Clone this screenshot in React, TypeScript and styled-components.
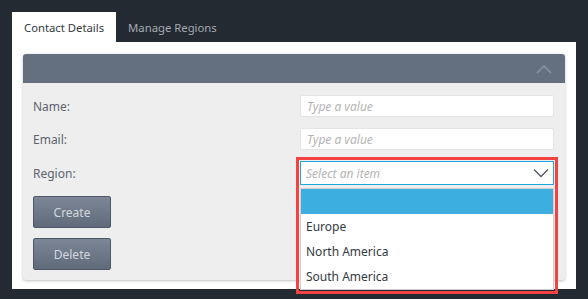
import * as React from 'react';
import styled, { createGlobalStyle } from 'styled-components';

const GlobalStyle = createGlobalStyle`
    html, body {
        margin: 0;
        padding: 0;
        background: #232a32;
        font-family: "Noto Sans", "Open Sans", sans-serif;
    }
`;

const Page = styled.div`
    width: 588px;
    height: 299px;
    padding: 12px 0 0 12px;
    box-sizing: border-box;
    background: #232a32;
`;

const TabStrip = styled.div`
    display: flex;
    height: 30px;
`;

const Tab = styled.div<{ $active?: boolean }>`
    display: flex;
    align-items: center;
    padding: 0 12px 0 12px;
    font-size: 11.3px;
    background: ${p => p.$active ? '#ffffff' : 'transparent'};
    color: ${p => p.$active ? '#333a42' : '#a3a9b1'};
`;

const TabPanel = styled.div`
    width: 564px;
    height: 247px;
    box-sizing: border-box;
    background: #ffffff;
    padding: 12px 11px 0 11px;
`;

const Card = styled.div`
    width: 542px;
    border-radius: 3px;
    background: #eeeeee;
    box-shadow: 0 1px 3px rgba(0, 0, 0, 0.25);
`;

const CardHeader = styled.div`
    display: flex;
    align-items: center;
    justify-content: flex-end;
    height: 29px;
    padding-right: 13px;
    background: #646f80;
    border-radius: 3px 3px 0 0;
`;

const CardBody = styled.div`
    display: grid;
    grid-template-columns: 267px 254px;
    grid-auto-rows: auto;
    row-gap: 11px;
    padding: 12px 11px 10px 10px;
`;

const Label = styled.label`
    display: flex;
    align-items: center;
    font-size: 12px;
    color: #5c6470;
`;

const TextInput = styled.input`
    height: 22px;
    box-sizing: border-box;
    border: 1px solid #e4e4e4;
    border-radius: 2px;
    background: #ffffff;
    padding: 0 6px;
    font-family: inherit;
    font-size: 12px;

    &::placeholder {
        color: #b4b4b4;
        font-style: italic;
    }
`;

const SelectWrap = styled.div`
    position: relative;
`;

const SelectBox = styled.div`
    display: flex;
    align-items: center;
    justify-content: space-between;
    height: 24px;
    box-sizing: border-box;
    border: 1px solid #1ea6df;
    background: #ffffff;
    padding: 0 4px 0 5px;
    font-size: 12px;
    font-style: italic;
    color: #b4b4b4;
`;

const DropList = styled.div`
    position: absolute;
    top: 27px;
    left: 0;
    width: 254px;
    box-sizing: border-box;
    border: 1px solid #d0d0d0;
    background: #ffffff;
    z-index: 2;
`;

const DropItem = styled.div<{ $highlight?: boolean }>`
    display: flex;
    align-items: center;
    height: 25px;
    padding-left: 5px;
    font-size: 12px;
    color: #333a42;
    background: ${p => p.$highlight ? '#3daee0' : 'transparent'};
`;

const Annotation = styled.div`
    position: absolute;
    left: -4px;
    top: -4px;
    width: 262px;
    height: 137px;
    box-sizing: border-box;
    border: 3px solid #f34242;
    pointer-events: none;
    z-index: 3;
`;

const ButtonCol = styled.div`
    display: flex;
    flex-direction: column;
    gap: 10px;
    grid-column: 1;
`;

const Button = styled.button`
    width: 78px;
    height: 32px;
    border: 1px solid #4f5867;
    border-radius: 2px;
    background: linear-gradient(#7c8696, #5f6a7a);
    color: #d4d8de;
    font-family: inherit;
    font-size: 12px;
    padding: 0;
`;

const ChevronUp = () => (
    <svg width="16" height="10" viewBox="0 0 16 10">
        <path d="M1 9 L8 2 L15 9" fill="none" stroke="#8a94a4" strokeWidth="1.5" />
    </svg>
);

const ChevronDown = () => (
    <svg width="16" height="10" viewBox="0 0 16 10">
        <path d="M1 1.5 L8 8.5 L15 1.5" fill="none" stroke="#555b63" strokeWidth="1.4" />
    </svg>
);

const regions = ['', 'Europe', 'North America', 'South America'];

const App: React.FC = () => {
    return (
        <Page>
            <GlobalStyle />
            <TabStrip>
                <Tab $active>Contact Details</Tab>
                <Tab>Manage Regions</Tab>
            </TabStrip>

            <TabPanel>
                <Card>
                    <CardHeader>
                        <ChevronUp />
                    </CardHeader>

                    <CardBody>
                        <Label>Name:</Label>
                        <TextInput placeholder='Type a value' />

                        <Label>Email:</Label>
                        <TextInput placeholder='Type a value' />

                        <Label>Region:</Label>
                        <SelectWrap>
                            <SelectBox>
                                <span>Select an item</span>
                                <ChevronDown />
                            </SelectBox>
                            <DropList>
                                {regions.map((r, i) => (
                                    <DropItem key={`region-${i}`} $highlight={i === 0}>{r}</DropItem>
                                ))}
                            </DropList>
                            <Annotation />
                        </SelectWrap>

                        <ButtonCol>
                            <Button>Create</Button>
                            <Button>Delete</Button>
                        </ButtonCol>
                    </CardBody>
                </Card>
            </TabPanel>
        </Page>
    );
};

export default App;
